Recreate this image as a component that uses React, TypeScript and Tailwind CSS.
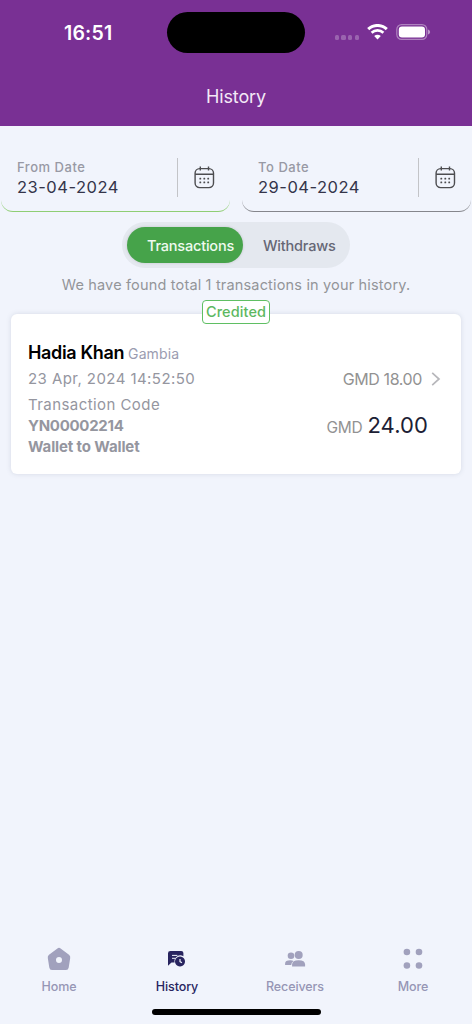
import type { ReactNode } from 'react';

function StatusBar() {
  return (
    <div className="relative flex h-[64px] items-center justify-between">
      <span className="mt-[1px] ml-[64px] text-[19.5px] leading-[24px] font-semibold tracking-[0.2px] text-white">16:51</span>
      <div className="absolute top-[12px] left-[167px] h-[41px] w-[138px] rounded-full bg-black" />
      <div className="mr-[41px] flex items-center">
        <div className="mt-[11px] mr-[8px] flex gap-[2.5px]">
          {[0, 1, 2, 3].map((n) => (
            <span key={n} className="size-[4.2px] rounded-[1.5px] bg-white/25" />
          ))}
        </div>
        <svg className="mr-[8px]" width="21" height="16" viewBox="0 0 21 16" fill="none">
          <path d="M1.2 5.2C6.4 0.2 14.6 0.2 19.8 5.2" stroke="white" strokeWidth="3" />
          <path d="M4.6 8.7C7.9 5.7 13.1 5.7 16.4 8.7" stroke="white" strokeWidth="2.7" />
          <path d="M7.2 12C9.1 10.3 11.9 10.3 13.8 12L10.5 15.4Z" fill="white" />
        </svg>
        <svg width="35" height="16" viewBox="0 0 35 16" fill="none">
          <rect x="0.8" y="0.6" width="30" height="14.8" rx="4.8" stroke="white" strokeOpacity=".4" strokeWidth="1.2" />
          <rect x="2.8" y="2.6" width="26.2" height="10.8" rx="3.2" fill="white" />
          <path d="M32 5.5C34.8 6.3 34.8 9.7 32 10.5Z" fill="white" fillOpacity=".5" />
        </svg>
      </div>
    </div>
  );
}

function CalendarIcon() {
  return (
    <svg width="22" height="24" viewBox="0 0 22 24" fill="none" stroke="#4d4d50" strokeWidth="1.4">
      <rect x="1.1" y="2.6" width="18.4" height="19" rx="4.5" />
      <path d="M1.1 8.2H19.5M6.3 0.4V4.4M14.5 0.4V4.4" />
      <g fill="#4d4d50" stroke="none">
        <rect x="5.4" y="11.7" width="1.8" height="1.8" rx=".5" />
        <rect x="9.4" y="11.7" width="1.8" height="1.8" rx=".5" />
        <rect x="13.3" y="11.7" width="1.8" height="1.8" rx=".5" />
        <rect x="5.4" y="15.4" width="1.8" height="1.8" rx=".5" />
        <rect x="9.4" y="15.4" width="1.8" height="1.8" rx=".5" />
        <rect x="13.3" y="15.4" width="1.8" height="1.8" rx=".5" />
      </g>
    </svg>
  );
}

function DateField({ label, value, border }: { label: string; value: string; border: string }) {
  return (
    <div className={`flex h-[72px] w-[229px] rounded-[12px] border-b ${border}`}>
      <div className="w-[176px] pt-[18px] pl-[16px]">
        <div className="text-[13px] leading-[18px] font-medium tracking-[0.53px] whitespace-nowrap text-[#9899a4]">{label}</div>
        <div className="mt-[1px] text-[16.5px] leading-[20px] tracking-[0.5px] whitespace-nowrap text-[#34354a]">{value}</div>
      </div>
      <div className="mt-[18px] h-[39px] w-px bg-[#c3c4c8]" />
      <div className="mt-[26px] ml-[16px]">
        <CalendarIcon />
      </div>
    </div>
  );
}

function TransactionCard() {
  return (
    <div className="relative mx-[11px] mt-[19px] flex h-[160px] justify-between rounded-[6px] bg-white pl-[17px] shadow-[0_0_5px_rgba(90,100,120,0.18)]">
      <div className="absolute top-[-14px] left-[191px] flex h-[24px] w-[68px] items-center justify-center rounded-[4px] border border-[#5fbf63] bg-white text-[14.5px] leading-[20px] font-medium tracking-[0.1px] text-[#5cb860]">
        Credited
      </div>
      <div className="pt-[27px] whitespace-nowrap text-[#95969f]">
        <div className="flex items-baseline leading-[24px]">
          <span className="text-[18px] font-semibold tracking-[-0.35px] text-black">Hadia Khan</span>
          <span className="ml-[4px] text-[14px] tracking-[0.1px] text-[#9b9cb0]">Gambia</span>
        </div>
        <div className="mt-[3px] text-[15px] leading-[20px] tracking-[0.43px]">23 Apr, 2024 14:52:50</div>
        <div className="mt-[6px] text-[15px] leading-[20px] tracking-[0.43px]">Transaction Code</div>
        <div className="mt-[1px] text-[15px] leading-[20px] font-bold tracking-[-0.28px]">YN00002214</div>
        <div className="mt-[1px] text-[15px] leading-[20px] font-bold tracking-[-0.13px]">Wallet to Wallet</div>
      </div>
      <div className="pt-[54px] pr-[20px] whitespace-nowrap text-[#929292]">
        <div className="flex items-center justify-end text-[16px] leading-[22px]">
          <span className="tracking-[-0.4px]">GMD 18.00</span>
          <svg className="ml-[9px]" width="10" height="14" viewBox="0 0 10 14" fill="none" stroke="#b7b7bb" strokeWidth="1.7">
            <path d="M1.2 0.9L8 7L1.2 13.1" />
          </svg>
        </div>
        <div className="mt-[21px] mr-[13px] flex items-baseline justify-end leading-[28px]">
          <span className="text-[15.5px] tracking-[-0.3px]">GMD</span>
          <span className="ml-[5px] text-[22px] font-normal tracking-[0.1px] text-[#1c2034]">24.00</span>
        </div>
      </div>
    </div>
  );
}

function NavItem({ label, active = false, children }: { label: string; active?: boolean; children: ReactNode }) {
  return (
    <div className={`flex flex-1 flex-col items-center ${active ? 'text-[#28245f]' : 'text-[#a1a1bd]'}`}>
      <svg width="26" height="26" viewBox="0 0 26 26" fill="currentColor">{children}</svg>
      <span className={`mt-[5px] text-[12.5px] leading-[18px] font-medium tracking-[-0.1px] ${active ? '' : 'text-[#9696b5]'}`}>{label}</span>
    </div>
  );
}

export default function App() {
  return (
    <div className="flex h-[1024px] w-[472px] flex-col overflow-hidden bg-[#f1f4fc] font-['Inter',sans-serif]">
      <header className="h-[126px] bg-[#793094]">
        <StatusBar />
        <h1 className="mt-[21px] text-center text-[18px] leading-[24px] font-normal tracking-[-0.15px] text-[#f3e9f6]">History</h1>
      </header>

      <div className="mt-[14px] flex justify-between px-[1px]">
        <DateField label="From Date" value="23-04-2024" border="border-[#8fce74]" />
        <DateField label="To Date" value="29-04-2024" border="border-[#85868c]" />
      </div>

      <div className="mt-[10px] flex h-[46px] w-[228px] self-center rounded-full bg-[#e4e8ef] p-[5px]">
        <div className="h-[36px] w-[116px] rounded-full bg-[#46a34a] pl-[20px] text-[14.5px] leading-[38px] font-medium tracking-[-0.2px] text-[#effaef] shadow-[0_0_3px_rgba(0,0,0,0.15)]">Transactions</div>
        <div className="ml-[20px] text-[14.5px] leading-[38px] font-medium tracking-[-0.2px] text-[#666775]">Withdraws</div>
      </div>

      <p className="mt-[7px] text-center text-[14.5px] leading-[20px] tracking-[0.17px] whitespace-nowrap text-[#939599]">
        We have found total 1 transactions in your history.
      </p>

      <TransactionCard />

      <nav className="mt-auto flex h-[62px]">
        <NavItem label="Home">
          <path fillRule="evenodd" d="M11.4 1.4Q13 .3 14.6 1.4L23 7.7Q24.6 9 24.2 11L22.7 20.5Q22.3 23 20 23H6Q3.7 23 3.3 20.5L1.8 11Q1.4 9 3 7.7ZM13 10A3 3 0 1 0 13 16A3 3 0 1 0 13 10Z" />
        </NavItem>
        <NavItem label="History" active>
          <path d="M6.4 4H17.2Q19.4 4 19.4 6V9.3A5.9 5.9 0 0 0 10.6 15.6H7.5L4 18.8V6.3Q4 4 6.4 4Z" />
          <path d="M8 8.4H13.4M8 11.3H11.4" fill="none" stroke="#f1f4fc" strokeWidth="1" />
          <path fillRule="evenodd" d="M16 9.5A5 5 0 1 0 16.01 9.5ZM15.4 11.9H16.6V14.2L18.3 15.3L17.6 16.3L15.4 15Z" />
        </NavItem>
        <NavItem label="Receivers">
          <circle cx="9" cy="8.8" r="3.3" />
          <circle cx="16.7" cy="8" r="4" />
          <path d="M3.1 18V16.5Q3.1 13.3 8.3 13.3Q10.3 13.3 11.5 13.9Q9.3 15.2 9.2 18Z" />
          <path d="M10.1 19.5V17.6Q10.1 13.3 16.6 13.3Q23.1 13.3 23.1 17.6V19.5Z" />
        </NavItem>
        <NavItem label="More">
          <circle cx="6.9" cy="5" r="3.3" />
          <circle cx="19" cy="5" r="3.3" />
          <circle cx="6.9" cy="18.5" r="3.3" />
          <circle cx="19" cy="18.5" r="3.3" />
        </NavItem>
      </nav>
      <div className="mt-[-1px] h-[16px]">
        <div className="mx-auto h-[6px] w-[169px] translate-y-[1px] rounded-full bg-black" />
      </div>
    </div>
  );
}
